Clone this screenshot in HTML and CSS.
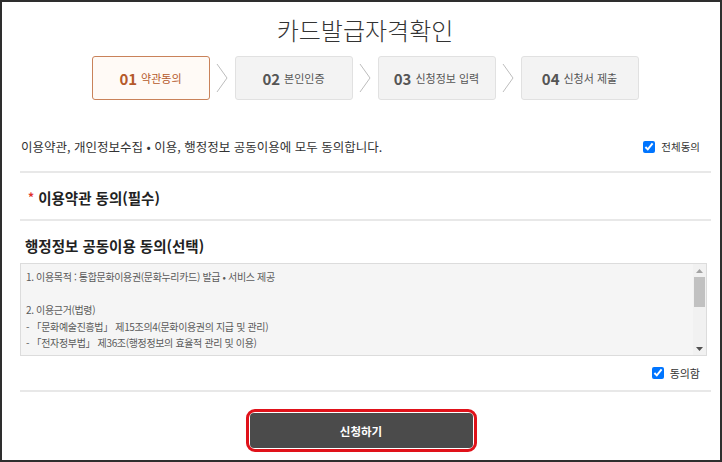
FILE: index.html
```html
<!DOCTYPE html>
<html lang="ko">
    <head>
        <meta charset="UTF-8">
        <meta name="viewport" content="width=device-width, initial-scale=1">
        <title>카드발급자격확인</title>
        <link rel="stylesheet" href="styles.css">
    </head>
    <body>
        <div class="frame">
            <h1 class="title">카드발급자격확인</h1>

            <ol class="steps">
                <li class="step active"><b>01</b> 약관동의</li>
                <li class="arrow"><svg width="12" height="30" viewBox="0 0 12 30"><polyline points="1,1 11,15 1,29" fill="none" stroke="#bdbdbd" stroke-width="1"/></svg></li>
                <li class="step"><b>02</b> 본인인증</li>
                <li class="arrow"><svg width="12" height="30" viewBox="0 0 12 30"><polyline points="1,1 11,15 1,29" fill="none" stroke="#bdbdbd" stroke-width="1"/></svg></li>
                <li class="step"><b>03</b> 신청정보 입력</li>
                <li class="arrow"><svg width="12" height="30" viewBox="0 0 12 30"><polyline points="1,1 11,15 1,29" fill="none" stroke="#bdbdbd" stroke-width="1"/></svg></li>
                <li class="step"><b>04</b> 신청서 제출</li>
            </ol>

            <div class="content">
                <div class="agree-all">
                    <p>이용약관, 개인정보수집 • 이용, 행정정보 공동이용에 모두 동의합니다.</p>
                    <label class="check"><input type="checkbox" checked> 전체동의</label>
                </div>

                <div class="section-row">
                    <h2 class="section-title"><span class="req">*</span> 이용약관 동의(필수)</h2>
                </div>

                <h2 class="section-title plain">행정정보 공동이용 동의(선택)</h2>
                <div class="terms">
                    <div class="terms-text">
                        <p>1. 이용목적 : 통합문화이용권(문화누리카드) 발급 • 서비스 제공</p>
                        <br>
                        <p>2. 이용근거(법령)</p>
                        <p>- 「문화예술진흥법」 제15조의4(문화이용권의 지급 및 관리)</p>
                        <p>- 「전자정부법」 제36조(행정정보의 효율적 관리 및 이용)</p>
                    </div>
                    <div class="scrollbar">
                        <svg class="sb-arrow" width="7" height="4" viewBox="0 0 7 4"><polygon points="3.5,0 7,4 0,4" fill="#a3a3a3"/></svg>
                        <div class="sb-track"><div class="sb-thumb"></div></div>
                        <svg class="sb-arrow" width="7" height="4" viewBox="0 0 7 4"><polygon points="0,0 7,0 3.5,4" fill="#505050"/></svg>
                    </div>
                </div>
                <div class="agree-row">
                    <label class="check"><input type="checkbox" checked> 동의함</label>
                </div>
            </div>

            <div class="actions">
                <span class="highlight"><button type="button" class="submit">신청하기</button></span>
            </div>
        </div>
    </body>
</html>
```

FILE: styles.css
```css
* {
    box-sizing: border-box;
}
body {
    margin: 0;
    background-color: #fff;
    font-family: "Noto Sans CJK KR", "Noto Sans", sans-serif;
    color: #333;
}
.frame {
    width: 722px;
    height: 462px;
    border: 2px solid #2e2e2e;
    overflow: hidden;
}
.title {
    margin: 10px 0 0;
    text-align: center;
    font-size: 24px;
    line-height: 36px;
    font-weight: 300;
    color: #333;
    padding-left: 8px;
}
.steps {
    list-style: none;
    margin: 8px 0 0;
    padding: 0 0 0 8px;
    display: flex;
    justify-content: center;
    align-items: center;
}
.step {
    width: 118px;
    height: 44px;
    display: flex;
    align-items: center;
    justify-content: center;
    gap: 4px;
    background-color: #f3f3f3;
    border: 1px solid #e1e1e1;
    border-radius: 3px;
    font-size: 11px;
    color: #555;
}
.step b {
    font-size: 15px;
    font-weight: 700;
}
.step.active {
    background-color: #fffaf6;
    border-color: #c9825a;
    color: #b5592a;
}
.arrow {
    width: 25px;
    display: flex;
    justify-content: center;
}
.arrow svg {
    display: block;
}
.content {
    padding: 0 9px 0 18px;
}
.agree-all {
    margin-top: 24px;
    height: 49px;
    display: flex;
    align-items: center;
    justify-content: space-between;
    border-bottom: 2px solid #e8e8e8;
    padding: 0 0 2px 1px;
}
.agree-all p {
    margin: 0;
    font-size: 12.5px;
    color: #333;
}
.check {
    display: flex;
    align-items: center;
    gap: 6px;
    font-size: 10.5px;
    color: #333;
    margin-right: 11px;
}
.check input {
    margin: 0;
    width: 12px;
    height: 12px;
}
.section-row {
    height: 48px;
    display: flex;
    align-items: center;
    border-bottom: 2px solid #e8e8e8;
    padding-top: 2px;
}
.section-title {
    margin: 0;
    font-size: 14.5px;
    font-weight: 700;
    color: #222;
    padding-left: 8px;
}
.section-title .req {
    color: #e0302a;
    font-size: 12px;
    vertical-align: 2px;
}
.section-title.plain {
    padding: 12px 0 0 5px;
    line-height: 26px;
    margin-bottom: 4px;
}
.terms {
    height: 93px;
    margin-right: 4px;
    display: flex;
    background-color: #f5f5f5;
    border: 1px solid #dcdcdc;
}
.terms-text {
    flex: 1;
    padding: 5px 6px 0 5px;
    overflow: hidden;
    font-size: 10px;
    line-height: 16.5px;
    color: #5a5a5a;
    letter-spacing: -0.35px;
}
.terms-text p {
    margin: 0;
}
.scrollbar {
    width: 13px;
    display: flex;
    flex-direction: column;
    align-items: center;
    padding: 5px 0 4px;
    gap: 4px;
    background-color: #f1f1f1;
}
.sb-arrow {
    display: block;
    flex: none;
}
.sb-track {
    flex: 1;
    width: 100%;
    padding: 0 1px;
}
.sb-thumb {
    height: 30px;
    background-color: #c1c1c1;
}
.agree-row {
    height: 36px;
    display: flex;
    align-items: center;
    justify-content: flex-end;
    border-bottom: 2px solid #e8e8e8;
}
.agree-row .check {
    font-size: 11px;
}
.actions {
    display: flex;
    justify-content: center;
    margin-top: 17px;
}
.highlight {
    display: block;
    border: 3px solid #e0121a;
    border-radius: 9px;
    padding: 1px;
}
.submit {
    display: block;
    width: 223px;
    height: 35px;
    border: none;
    border-radius: 4px;
    background-color: #4b4b4b;
    color: #fff;
    font-family: inherit;
    font-size: 11.5px;
    font-weight: 700;
}
```
